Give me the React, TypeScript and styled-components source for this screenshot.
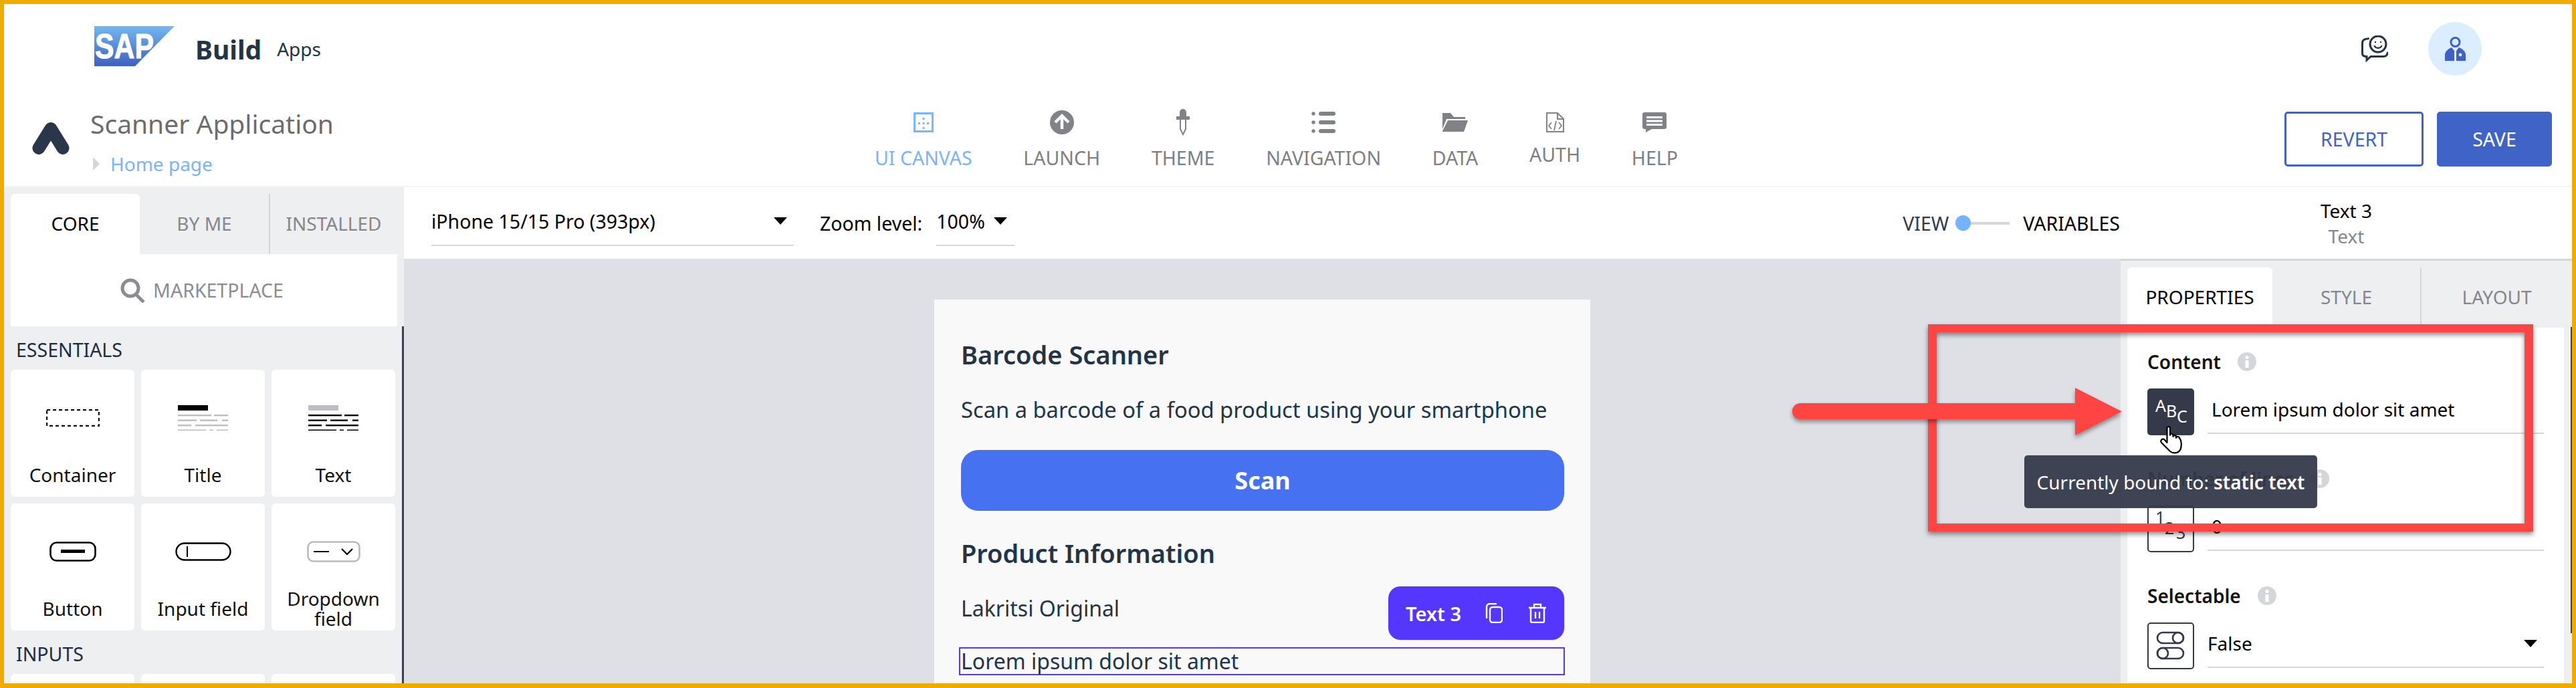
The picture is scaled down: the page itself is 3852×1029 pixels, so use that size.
import React from 'react';
import styled, { createGlobalStyle } from 'styled-components';

const GlobalStyle = createGlobalStyle`
  html, body { margin: 0; padding: 0; background: #fff; }
  * { box-sizing: border-box; }
  body { font-family: "Noto Sans", "Open Sans", sans-serif; }
`;

const Frame = styled.div`
  position: relative;
  width: 3852px;
  height: 1029px;
  border: solid #f0ab00;
  border-width: 6px 6px 7px 6px;
  display: flex;
  flex-direction: column;
  overflow: hidden;
  background: #fff;
`;

/* top shell bar */
const TopBar = styled.header`
  height: 134px;
  flex: none;
  display: flex;
  align-items: center;
  padding: 0 135px;
`;
const SapLogo = styled.svg`
  margin-bottom: 8px;
  flex: none;
`;
const BuildText = styled.span`
  margin-left: 31px;
  font-size: 39px;
  font-weight: 700;
  color: #223548;
`;
const AppsText = styled.span`
  margin-left: 23px;
  font-size: 28px;
  color: #223548;
`;
const ShellActions = styled.div`
  margin-left: auto;
  display: flex;
  align-items: center;
  gap: 60px;
`;
const Avatar = styled.div`
  width: 80px;
  height: 80px;
  border-radius: 50%;
  background: #dbeeff;
  display: flex;
  align-items: center;
  justify-content: center;
`;

/* studio header */
const StudioBar = styled.div`
  height: 138px;
  flex: none;
  display: grid;
  grid-template-columns: 1302px 1201px 1fr;
`;
const ProjectBlock = styled.div`
  display: flex;
  padding: 20px 0 0 42px;
`;
const ProjectLogo = styled.svg`
  margin: 23px 31px 0 0;
  flex: none;
`;
const ProjectInfo = styled.div`
  display: flex;
  flex-direction: column;
`;
const ProjectTitle = styled.div`
  font-size: 39px;
  line-height: 50px;
  color: #6a6d70;
`;
const PageRow = styled.div`
  display: flex;
  align-items: center;
  height: 40px;
  margin-top: 15px;
  padding-left: 4px;
`;
const PageArrow = styled.span`
  width: 0;
  height: 0;
  border-style: solid;
  border-width: 10px 0 10px 10px;
  border-color: transparent transparent transparent #d5d6da;
  margin-right: 16px;
`;
const PageLink = styled.span`
  font-size: 28px;
  color: #7ab4ff;
`;
const Nav = styled.nav`
  display: flex;
  justify-content: space-between;
  padding-top: 23px;
`;
const NavItem = styled.div<{ $active?: boolean; $raised?: boolean }>`
  display: flex;
  flex-direction: column;
  align-items: center;
  color: ${(p) => (p.$active ? '#7ab4ff' : '#7c7f85')};
  font-size: 28.5px;
  line-height: 30px;
  & > svg {
    height: 40px;
    margin-bottom: ${(p) => (p.$raised ? '13px' : '18px')};
  }
`;
const StudioActions = styled.div`
  display: flex;
  justify-content: flex-end;
  gap: 20px;
  padding: 27px 30px 0 0;
`;
const ActionButton = styled.div<{ $primary?: boolean }>`
  height: 82px;
  width: ${(p) => (p.$primary ? '172px' : '208px')};
  border: 3px solid #4063c8;
  border-radius: 5px;
  background: ${(p) => (p.$primary ? '#4063c8' : '#fff')};
  color: ${(p) => (p.$primary ? '#fff' : '#4063c8')};
  display: flex;
  align-items: center;
  justify-content: center;
  font-size: 28.5px;
`;

/* workspace */
const Workspace = styled.div`
  flex: 1;
  min-height: 0;
  display: grid;
  grid-template-columns: 598px 1fr;
  border-top: 2px solid #f5f5f6;
  overflow: hidden;
`;
const Sidebar = styled.aside`
  background: #eeeff1;
  padding: 10px 0 0 10px;
  display: flex;
  flex-direction: column;
  min-height: 0;
`;
const TabRow = styled.div<{ $columns: string }>`
  display: grid;
  grid-template-columns: ${(p) => p.$columns};
  height: 90px;
  flex: none;
`;
const Tab = styled.div<{ $active?: boolean; $divider?: boolean }>`
  display: flex;
  align-items: center;
  justify-content: center;
  padding-bottom: 3px;
  font-size: 28px;
  color: ${(p) => (p.$active ? '#000' : '#85878c')};
  background: ${(p) => (p.$active ? '#fff' : 'transparent')};
  border-radius: ${(p) => (p.$active ? '6px 6px 0 0' : '0')};
  border-left: ${(p) => (p.$divider ? '2px solid #d5d6da' : 'none')};
`;
const MarketplaceRow = styled.div`
  height: 108px;
  flex: none;
  margin-right: 10px;
  background: #fff;
  display: flex;
  align-items: center;
  justify-content: center;
  gap: 12px;
  padding-right: 6px;
  font-size: 28.5px;
  color: #8a8d92;
`;
const ComponentList = styled.div`
  flex: 1;
  margin-left: -10px;
  padding-left: 10px;
  border-right: 3px solid #3a4150;
  overflow: hidden;
`;
const SectionLabel = styled.div`
  height: 40px;
  margin-top: 15px;
  padding-left: 8px;
  line-height: 40px;
  font-size: 28.5px;
  color: #1d2d3e;
`;
const CardGrid = styled.div`
  display: grid;
  grid-template-columns: repeat(3, 185px);
  grid-auto-rows: 190px;
  gap: 10px;
  margin-top: 10px;
`;
const Card = styled.div`
  background: #fff;
  border-radius: 6px;
  display: flex;
  flex-direction: column;
`;
const CardIcon = styled.div`
  height: 127px;
  padding-top: 17px;
  display: flex;
  align-items: center;
  justify-content: center;
  flex: none;
`;
const CardLabel = styled.div`
  height: 60px;
  display: flex;
  align-items: center;
  justify-content: center;
  text-align: center;
  font-size: 28px;
  line-height: 30px;
  color: #111;
`;

const Main = styled.main`
  display: grid;
  grid-template-rows: 107px 1fr;
  min-height: 0;
`;
const Toolbar = styled.div`
  display: flex;
  align-items: center;
  padding-left: 41px;
  color: #000;
  font-size: 28.5px;
`;
const SelectBox = styled.div<{ $width: number }>`
  width: ${(p) => p.$width}px;
  height: 77px;
  margin-bottom: 9px;
  padding-top: 20px;
  border-bottom: 2px solid #d5d6da;
  display: flex;
  align-items: flex-start;
  justify-content: space-between;
  line-height: 40px;
  flex: none;
`;
const Caret = styled.span<{ $right?: number }>`
  width: 0;
  height: 0;
  margin: 14px ${(p) => p.$right ?? 10}px 0 0;
  border-style: solid;
  border-width: 11px 10px 0 10px;
  border-color: #000 transparent transparent transparent;
  flex: none;
`;
const ZoomLabel = styled.span`
  margin: 0 21px 0 39px;
`;
const ModeSwitch = styled.div`
  margin-left: auto;
  display: flex;
  align-items: center;
  font-size: 28.5px;
`;
const ModeLabel = styled.span<{ $on?: boolean }>`
  color: ${(p) => (p.$on ? '#000' : '#343a4a')};
`;
const SwitchTrack = styled.div`
  position: relative;
  width: 81px;
  height: 4px;
  margin: 0 20px 0 10px;
  background: #d5d6da;
`;
const SwitchKnob = styled.span`
  position: absolute;
  left: 0;
  top: -10px;
  width: 23px;
  height: 23px;
  border-radius: 50%;
  background: #73b3ff;
`;
const SelectedInfo = styled.div`
  width: 675px;
  margin-left: 1px;
  text-align: center;
  flex: none;
`;
const SelectedName = styled.div`
  font-size: 28px;
  line-height: 38px;
  color: #000;
`;
const SelectedType = styled.div`
  font-size: 28px;
  line-height: 38px;
  color: #85878c;
`;
const Stage = styled.div`
  display: grid;
  grid-template-columns: 1fr 675px;
  min-height: 0;
  overflow: hidden;
`;
const Canvas = styled.div`
  background: #dee0e5;
  display: flex;
  justify-content: center;
  padding-top: 61px;
  overflow: hidden;
`;
const Phone = styled.div`
  position: relative;
  width: 981px;
  height: 700px;
  padding: 60px 39px 0 40px;
  background: #f9f9f9;
  flex: none;
`;
const PhoneHeading = styled.div<{ $top?: number }>`
  margin-top: ${(p) => p.$top ?? 0}px;
  font-size: 38px;
  line-height: 44px;
  font-weight: 600;
  color: #223548;
`;
const PhoneText = styled.div<{ $top: number; $size?: number }>`
  margin-top: ${(p) => p.$top}px;
  font-size: ${(p) => p.$size ?? 32}px;
  line-height: 44px;
  color: #223548;
`;
const ScanButton = styled.div`
  margin-top: 38px;
  height: 91px;
  border-radius: 26px;
  background: #4671f0;
  color: #fff;
  font-size: 36px;
  font-weight: 700;
  display: flex;
  align-items: center;
  justify-content: center;
`;
const SelectedText = styled.div`
  margin: 36px -1px 0 -3px;
  height: 42px;
  padding-left: 1px;
  border: 2px solid #5536ff;
  font-size: 32px;
  line-height: 38px;
  color: #223548;
  white-space: nowrap;
`;
const SelectionTag = styled.div`
  position: absolute;
  right: 39px;
  top: 429px;
  width: 263px;
  height: 80px;
  padding: 0 27px 0 26px;
  display: flex;
  align-items: center;
  border-radius: 18px;
  background: #5536ff;
  color: #fff;
  font-size: 29px;
  font-weight: 600;
  & > svg:first-of-type {
    margin: 0 39px 0 auto;
  }
`;

/* right panel */
const PropertyPanel = styled.aside`
  position: relative;
  background: #eeeff1;
  border-top: 3px solid #d5d6da;
  padding: 10px 0 0 10px;
  display: flex;
  flex-direction: column;
  min-height: 0;
`;
const PanelBody = styled.div`
  flex: 1;
  margin-right: 12px;
  padding: 31px 30px 0 30px;
  background: #fff;
`;
const PanelScroll = styled.span`
  position: absolute;
  right: 0;
  top: 99px;
  width: 2px;
  height: 458px;
  background: #3a4150;
`;
const FieldLabel = styled.div`
  height: 40px;
  display: flex;
  align-items: center;
  gap: 25px;
  font-size: 28px;
  font-weight: 600;
  color: #111;
`;
const FieldRow = styled.div`
  display: flex;
  height: 70px;
  margin: 20px 0 45px;
  gap: 20px;
`;
const BindingBox = styled.div<{ $active?: boolean }>`
  width: 70px;
  height: 70px;
  flex: none;
  border-radius: 5px;
  border: 2px solid #343a4a;
  background: ${(p) => (p.$active ? '#343a4a' : '#fff')};
  color: ${(p) => (p.$active ? '#fff' : '#343a4a')};
`;
const FieldValue = styled.div<{ $inset?: number }>`
  flex: 1;
  height: 68px;
  padding-left: ${(p) => p.$inset ?? 6}px;
  border-bottom: 2px solid #d5d6da;
  display: flex;
  justify-content: space-between;
  font-size: 28px;
  line-height: 62px;
  color: #000;
`;
const ValueCaret = styled(Caret)`
  margin: 26px 10px 0 0;
`;

/* annotations lying over the page */
const RedBox = styled.div`
  position: absolute;
  left: 2877px;
  top: 479px;
  width: 905px;
  height: 310px;
  border: solid #ff4444;
  border-width: 12px 13px;
  box-shadow: 0 4px 7px rgba(0, 0, 0, 0.45), inset 0 4px 7px rgba(0, 0, 0, 0.45);
`;
const RedArrow = styled.svg`
  position: absolute;
  left: 2674px;
  top: 574px;
  filter: drop-shadow(0 4px 3px rgba(0, 0, 0, 0.4));
`;
const Tooltip = styled.div`
  position: absolute;
  left: 3021px;
  top: 675px;
  width: 438px;
  height: 79px;
  border-radius: 5px;
  background: rgba(52, 58, 74, 0.95);
  color: #fff;
  font-size: 28px;
  display: flex;
  align-items: center;
  justify-content: center;
  white-space: nowrap;
  b {
    font-weight: 600;
    margin-left: 7px;
  }
`;
const HandCursor = styled.svg`
  position: absolute;
  left: 3224px;
  top: 631px;
`;

const InfoIcon = () => (
  <svg width="28" height="28" viewBox="0 0 28 28">
    <circle cx="14" cy="14" r="14" fill="#d5d6da" />
    <circle cx="14" cy="7.5" r="2.6" fill="#fff" />
    <rect x="11.5" y="12" width="5" height="11" fill="#fff" />
  </svg>
);

const CaptionIcon = ({ heading, lines }: { heading: string; lines: string }) => (
  <svg width="76" height="38" viewBox="0 0 76 38">
    <rect width="45" height="8" fill={heading} />
    {[
      [14, [[0, 50], [54, 75]]],
      [21.5, [[0, 28], [33, 59], [66, 75]]],
      [29, [[0, 20], [26, 75]]],
      [36.5, [[0, 42], [47, 53], [58, 75]]],
    ].map(([y, parts]) =>
      (parts as number[][]).map(([a, b]) => (
        <rect key={`${y}-${a}`} x={a} y={y as number} width={b - a} height="2.4" fill={lines} />
      )),
    )}
  </svg>
);

const cards = [
  {
    label: 'Container',
    icon: (
      <svg width="80" height="26" viewBox="0 0 80 26">
        <rect x="1" y="1" width="78" height="24" fill="none" stroke="#111" strokeWidth="2.4" strokeDasharray="5 4" />
      </svg>
    ),
  },
  { label: 'Title', icon: <CaptionIcon heading="#000" lines="#bdbec3" /> },
  { label: 'Text', icon: <CaptionIcon heading="#bdbec3" lines="#000" /> },
  {
    label: 'Button',
    icon: (
      <svg width="70" height="30" viewBox="0 0 70 30">
        <rect x="1.5" y="1.5" width="67" height="27" rx="9" fill="none" stroke="#000" strokeWidth="2.6" />
        <rect x="17" y="12" width="36" height="5" fill="#000" />
      </svg>
    ),
  },
  {
    label: 'Input field',
    icon: (
      <svg width="84" height="28" viewBox="0 0 84 28">
        <rect x="1.5" y="1.5" width="81" height="25" rx="12.5" fill="none" stroke="#000" strokeWidth="2.4" />
        <rect x="17" y="6" width="2" height="16" fill="#000" />
      </svg>
    ),
  },
  {
    label: 'Dropdown field',
    icon: (
      <svg width="80" height="32" viewBox="0 0 80 32">
        <rect x="1.5" y="1.5" width="77" height="29" rx="8" fill="none" stroke="#b9bbc0" strokeWidth="2.6" />
        <rect x="10" y="15" width="23" height="2" fill="#000" />
        <path d="M52 12l8 8 8-8" fill="none" stroke="#000" strokeWidth="2.2" />
      </svg>
    ),
  },
];

const navIconColor = '#7f8287';

const navItems = [
  {
    label: 'UI CANVAS',
    active: true,
    icon: (
      <svg width="30" viewBox="0 0 30 40">
        <rect x="1.5" y="6.5" width="27" height="27" fill="none" stroke="#7ab6ff" strokeWidth="3" />
        {[[13.5, 13], [7, 20], [13.5, 20], [20, 20], [13.5, 27]].map(([x, y]) => (
          <rect key={`${x}-${y}`} x={x} y={y} width="3" height="3" fill="#7ab6ff" />
        ))}
      </svg>
    ),
  },
  {
    label: 'LAUNCH',
    icon: (
      <svg width="36" viewBox="0 0 36 40">
        <circle cx="18" cy="20" r="18" fill={navIconColor} />
        <path d="M8 20L18 10L28 20M18 11V30" fill="none" stroke="#fff" strokeWidth="4.4" />
      </svg>
    ),
  },
  {
    label: 'THEME',
    icon: (
      <svg width="20" viewBox="0 0 20 40">
        <path d="M5 11V5a5 5 0 0 1 10 0v6h5v5H0v-5z" fill={navIconColor} />
        <path d="M6 16V30L10 38L14 30V16" fill="#fff" stroke={navIconColor} strokeWidth="2" />
      </svg>
    ),
  },
  {
    label: 'NAVIGATION',
    icon: (
      <svg width="36" viewBox="0 0 36 40">
        {[7, 20, 33].map((y) => (
          <g key={y} fill={navIconColor}>
            <circle cx="3" cy={y} r="2.7" />
            <rect x="11" y={y - 3} width="25" height="6" rx="3" />
          </g>
        ))}
      </svg>
    ),
  },
  {
    label: 'DATA',
    icon: (
      <svg width="38" viewBox="0 0 38 40">
        <path d="M0 6h12l5 6h17v3H6L0 30z" fill={navIconColor} />
        <path d="M8 17h30l-6 17H0v-1z" fill={navIconColor} />
      </svg>
    ),
  },
  {
    label: 'AUTH',
    raised: true,
    icon: (
      <svg width="27" viewBox="0 0 27 40">
        <path d="M1 6H17L26 15V34H1Z" fill="none" stroke={navIconColor} strokeWidth="2" />
        <path d="M17 6V15H26" fill="none" stroke={navIconColor} strokeWidth="2" />
        <path d="M8 20L4 25L8 30M19 20L23 25L19 30M15 18L12 32" fill="none" stroke={navIconColor} strokeWidth="1.8" />
      </svg>
    ),
  },
  {
    label: 'HELP',
    icon: (
      <svg width="36" viewBox="0 0 36 40">
        <path d="M3 5H33a3 3 0 0 1 3 3V27a3 3 0 0 1-3 3H14L5 35V30H3a3 3 0 0 1-3-3V8a3 3 0 0 1 3-3Z" fill={navIconColor} />
        <rect x="6" y="11" width="24" height="3" fill="#fff" />
        <rect x="6" y="16.5" width="24" height="3" fill="#fff" />
        <rect x="6" y="22" width="24" height="3" fill="#fff" />
      </svg>
    ),
  },
];

export default function App() {
  return (
    <>
      <GlobalStyle />
      <Frame>
        <TopBar>
          <SapLogo width="120" height="60" viewBox="0 0 120 60">
            <defs>
              <linearGradient id="sapBlue" x1="0" y1="0" x2="0" y2="1">
                <stop offset="0" stopColor="#73b7f2" />
                <stop offset="1" stopColor="#3f60bd" />
              </linearGradient>
            </defs>
            <polygon points="0,0 120,0 61,60 0,60" fill="url(#sapBlue)" />
            <text x="1" y="48" fill="#fff" stroke="#fff" strokeWidth="1" fontFamily="Liberation Sans" fontWeight="700" fontSize="51" textLength="88" lengthAdjust="spacingAndGlyphs">SAP</text>
          </SapLogo>
          <BuildText>Build</BuildText>
          <AppsText>Apps</AppsText>
          <ShellActions>
            <svg width="40" height="40" viewBox="0 0 40 40" fill="none" stroke="#223548" strokeWidth="3">
              <path d="M10.5 4.7C5 5 1.5 7 1.5 11V27C1.5 30 4 31.5 8 31.5V37L14 31.5H33C37 31.5 39 29 39 26" strokeLinecap="round" />
              <circle cx="25" cy="13" r="12" />
              <circle cx="21" cy="10" r="1.2" fill="#223548" stroke="none" />
              <circle cx="29" cy="10" r="1.2" fill="#223548" stroke="none" />
              <path d="M19.5 15C21 20 29 20 30.5 15" strokeWidth="2.4" />
            </svg>
            <Avatar>
              <svg width="31" height="36" viewBox="0 0 31 36" fill="#3f60c8">
                <ellipse cx="15.5" cy="8" rx="6.5" ry="6.5" fill="none" stroke="#3f60c8" strokeWidth="3" />
                <path d="M0 36V27C0 22 5 18 10 16L14 21V36Z" />
                <path d="M17 21L21 16C26 18 31 22 31 27V36H17Z" />
                <circle cx="23" cy="27" r="2.4" fill="#dbeeff" />
              </svg>
            </Avatar>
          </ShellActions>
        </TopBar>

        <StudioBar>
          <ProjectBlock>
            <ProjectLogo width="56" height="48" viewBox="0 0 56 48" fill="none" stroke="#2a364a" strokeWidth="19" strokeLinecap="round" strokeLinejoin="round">
              <path d="M10 38.5L28 9.5L46 38.5" />
            </ProjectLogo>
            <ProjectInfo>
              <ProjectTitle>Scanner Application</ProjectTitle>
              <PageRow>
                <PageArrow />
                <PageLink>Home page</PageLink>
              </PageRow>
            </ProjectInfo>
          </ProjectBlock>
          <Nav>
            {navItems.map((item) => (
              <NavItem key={item.label} $active={item.active} $raised={item.raised}>
                {item.icon}
                {item.label}
              </NavItem>
            ))}
          </Nav>
          <StudioActions>
            <ActionButton>REVERT</ActionButton>
            <ActionButton $primary>SAVE</ActionButton>
          </StudioActions>
        </StudioBar>

        <Workspace>
          <Sidebar>
            <TabRow $columns="193px 193px 192px">
              <Tab $active>CORE</Tab>
              <Tab>BY ME</Tab>
              <Tab $divider>INSTALLED</Tab>
            </TabRow>
            <MarketplaceRow>
              <svg width="37" height="37" viewBox="0 0 37 37" fill="none" stroke="#8a8d92" strokeWidth="5">
                <circle cx="15" cy="15" r="12" />
                <path d="M23 24L35 36" />
              </svg>
              MARKETPLACE
            </MarketplaceRow>
            <ComponentList>
              <SectionLabel>ESSENTIALS</SectionLabel>
              <CardGrid>
                {cards.map((card) => (
                  <Card key={card.label}>
                    <CardIcon>{card.icon}</CardIcon>
                    <CardLabel>{card.label}</CardLabel>
                  </Card>
                ))}
              </CardGrid>
              <SectionLabel>INPUTS</SectionLabel>
              <CardGrid>
                <Card />
                <Card />
                <Card />
              </CardGrid>
            </ComponentList>
          </Sidebar>

          <Main>
            <Toolbar>
              <SelectBox $width={542}>
                iPhone 15/15 Pro (393px)
                <Caret />
              </SelectBox>
              <ZoomLabel>Zoom level:</ZoomLabel>
              <SelectBox $width={117}>
                100%
                <Caret $right={11} />
              </SelectBox>
              <ModeSwitch>
                <ModeLabel>VIEW</ModeLabel>
                <SwitchTrack>
                  <SwitchKnob />
                </SwitchTrack>
                <ModeLabel $on>VARIABLES</ModeLabel>
              </ModeSwitch>
              <SelectedInfo>
                <SelectedName>Text 3</SelectedName>
                <SelectedType>Text</SelectedType>
              </SelectedInfo>
            </Toolbar>

            <Stage>
              <Canvas>
                <Phone>
                  <PhoneHeading>Barcode Scanner</PhoneHeading>
                  <PhoneText $top={39} $size={32.7}>Scan a barcode of a food product using your smartphone</PhoneText>
                  <ScanButton>Scan</ScanButton>
                  <PhoneHeading $top={41}>Product Information</PhoneHeading>
                  <PhoneText $top={39}>Lakritsi Original</PhoneText>
                  <SelectedText>Lorem ipsum dolor sit amet</SelectedText>
                  <SelectionTag>
                    Text 3
                    <svg width="26" height="30" viewBox="0 0 26 30" fill="none" stroke="#fff" strokeWidth="2.4">
                      <rect x="7" y="6" width="18" height="23" rx="4" />
                      <path d="M2 23V6a5 5 0 0 1 5-5H17" />
                    </svg>
                    <svg width="26" height="30" viewBox="0 0 26 30" fill="none" stroke="#fff" strokeWidth="2.4">
                      <path d="M0 7H26M8 7V2H18V7M3 7V27a2 2 0 0 0 2 2H21a2 2 0 0 0 2-2V7M10 13V23M16 13V23" />
                    </svg>
                  </SelectionTag>
                </Phone>
              </Canvas>

              <PropertyPanel>
                <TabRow $columns="217px 221px 1fr">
                  <Tab $active>PROPERTIES</Tab>
                  <Tab>STYLE</Tab>
                  <Tab $divider>LAYOUT</Tab>
                </TabRow>
                <PanelBody>
                  <FieldLabel>
                    Content
                    <InfoIcon />
                  </FieldLabel>
                  <FieldRow>
                    <BindingBox $active>
                      <svg width="66" height="66" viewBox="2 2 66 66" fill="#fff" fontFamily="Noto Sans" fontSize="25">
                        <text x="12" y="35">A</text>
                        <text x="28" y="43">B</text>
                        <text x="44" y="51">C</text>
                      </svg>
                    </BindingBox>
                    <FieldValue>Lorem ipsum dolor sit amet</FieldValue>
                  </FieldRow>
                  <FieldLabel>
                    Number of lines
                    <InfoIcon />
                  </FieldLabel>
                  <FieldRow>
                    <BindingBox>
                      <svg width="66" height="66" viewBox="2 2 66 66" fill="#343a4a" fontFamily="Noto Sans" fontSize="25">
                        <text x="12" y="27">1</text>
                        <text x="26" y="43">2</text>
                        <text x="43" y="50">3</text>
                      </svg>
                    </BindingBox>
                    <FieldValue>0</FieldValue>
                  </FieldRow>
                  <FieldLabel>
                    Selectable
                    <InfoIcon />
                  </FieldLabel>
                  <FieldRow>
                    <BindingBox>
                      <svg width="66" height="66" viewBox="2 2 66 66" fill="none" stroke="#343a4a" strokeWidth="2.6">
                        <rect x="15" y="15" width="39" height="16" rx="8" />
                        <circle cx="46" cy="23" r="8" />
                        <rect x="15" y="38" width="39" height="16" rx="8" />
                        <circle cx="23" cy="46" r="8" />
                      </svg>
                    </BindingBox>
                    <FieldValue $inset={0}>
                      False
                      <ValueCaret />
                    </FieldValue>
                  </FieldRow>
                </PanelBody>
                <PanelScroll />
              </PropertyPanel>
            </Stage>
          </Main>
        </Workspace>

        <RedBox />
        <RedArrow width="493" height="72" viewBox="0 0 493 72" fill="#ff4444">
          <path d="M423 0L493 35.5L423 71V47H12a12 12 0 0 1 0-24H423Z" />
        </RedArrow>
        <Tooltip>
          Currently bound to:<b>static text</b>
        </Tooltip>
        <HandCursor width="34" height="42" viewBox="0 0 34 42" fill="#fff" stroke="#000" strokeWidth="2.2" strokeLinejoin="round">
          <path d="M10.5 3C10.5 0.5 15 0.5 15 3V14C15 11 19.5 11 19.5 14V16C19.5 13.5 24 13.5 24 16V18C24 15.5 28.5 15.5 29 18C32.5 22 32.5 30 30.5 35C28 41 20 42 15 38L2 25C0 22 3 18 6.5 20.5L10.5 25Z" />
        </HandCursor>
      </Frame>
    </>
  );
}
